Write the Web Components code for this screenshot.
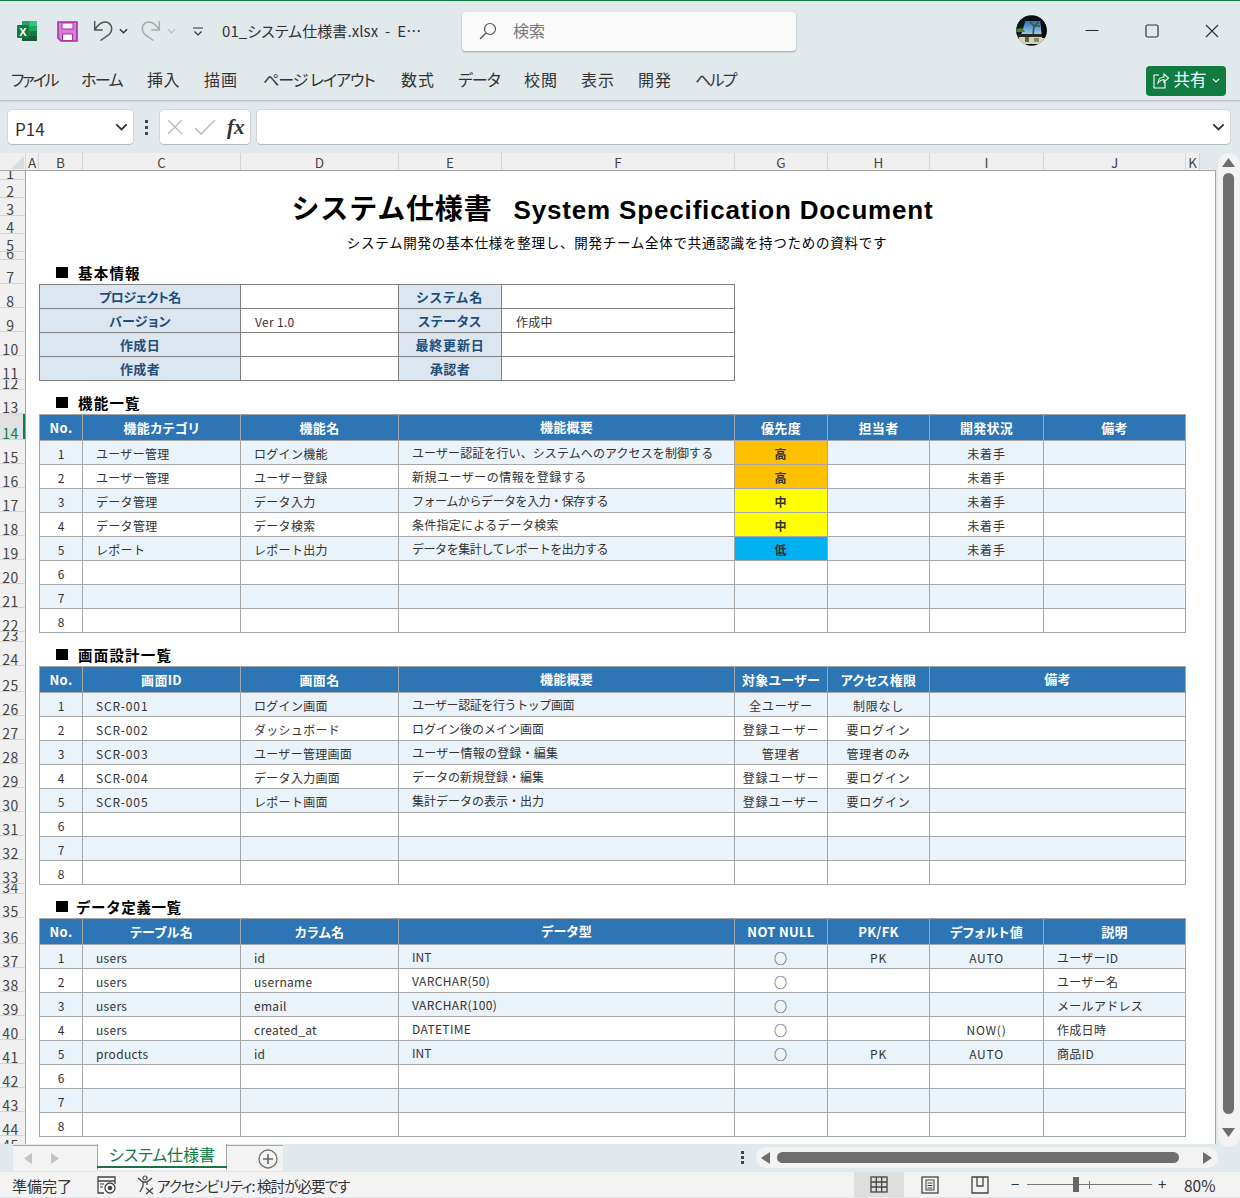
<!DOCTYPE html>
<html lang="ja">
<head>
<meta charset="utf-8">
<title>01_システム仕様書.xlsx</title>
<style>
html,body{margin:0;padding:0;background:#e1e9ed;}
body{width:1240px;height:1198px;overflow:hidden;font-family:"Noto Sans CJK JP","Noto Sans",sans-serif;}
excel-app{display:block;}
</style>
</head>
<body>
<excel-app></excel-app>
<script>
const JP='"Noto Sans CJK JP","Noto Sans",sans-serif';
class Base extends HTMLElement{
  connectedCallback(){
    if(this.shadowRoot)return;
    this.attachShadow({mode:'open'}).innerHTML=this.render();
  }
  render(){return ''}
}
function chev(c,w=10){return `<svg width="${w}" height="${w*.6}" viewBox="0 0 10 6"><path d="M1 1l4 4 4-4" fill="none" stroke="${c}" stroke-width="1.4"/></svg>`}

class ExcelApp extends Base{render(){return `<style>
:host{display:flex;flex-direction:column;width:1240px;height:1198px;overflow:hidden;background:#e1e9ed;}
.main{display:flex;height:992px;}
.left{width:1216px;display:flex;flex-direction:column;}
.body{display:flex;height:974px;}
</style>
<title-bar></title-bar><ribbon-tabs></ribbon-tabs><formula-bar></formula-bar>
<div class="main"><div class="left"><col-head></col-head><div class="body"><row-head></row-head><spec-sheet></spec-sheet></div></div><v-scroll></v-scroll></div>
<sheet-tabs></sheet-tabs><status-bar></status-bar>`}}

class TitleBar extends Base{render(){return `<style>
:host{display:block;height:60px;box-sizing:border-box;border-top:1px solid #107c41;position:relative;font-family:${JP};color:#333;}
.row{display:flex;align-items:center;height:59px;}
.excel{margin-left:17px;width:21px;height:20px;display:block;margin-top:1px}
.save{margin-left:19px;width:21px;height:21px;display:block;margin-top:1px}
.undo{margin-left:15px;width:20px;height:21px;display:block}
.c1{margin-left:6px;display:block}
.redo{margin-left:13px;width:20px;height:21px;display:block}
.c2{margin-left:6px;display:block}
.qat{margin-left:17px;width:10px;height:10px;display:block;margin-top:2px}
.name{margin-left:19px;width:212px;font-size:15px;font-feature-settings:"palt";white-space:pre;color:#333;margin-top:-1px;letter-spacing:.08px}
.search{margin-left:28px;width:334px;height:39px;margin-top:1px;box-sizing:border-box;background:#fafafa;border-radius:4px;box-shadow:0 1px 2px rgba(0,0,0,.3);display:flex;align-items:center;padding-left:17px;gap:16px;color:#777;font-size:16px}
.search span{padding-bottom:3px}
.avatar{margin-left:220px;width:31px;height:31px;display:block;margin-top:0}
.win{width:14px;height:14px;display:block}
.w2{margin-left:46px}
</style><div class="row">
<svg class="excel" viewBox="0 0 21 20"><rect x="5" y="0" width="15" height="20" rx="1" fill="#21a366"/><rect x="12.5" y="0" width="7.5" height="5" fill="#33c481"/><rect x="12.5" y="10" width="7.5" height="5" fill="#107c41"/><rect x="5" y="15" width="15" height="5" fill="#185c37"/><rect x="0" y="4" width="12" height="13" rx="1.2" fill="#107c41"/><text x="6" y="14.5" font-family="Liberation Sans" font-weight="700" font-size="11" fill="#fff" text-anchor="middle">X</text></svg>
<svg class="save" viewBox="0 0 21 21"><path d="M1 1H20V20H4L1 17Z" fill="#d480d4" stroke="#a733a7" stroke-width="1.6"/><rect x="5" y="2" width="11" height="6" fill="#f8ecf8" stroke="#a733a7" stroke-width="1"/><rect x="5.5" y="13" width="10" height="6.5" fill="#fff" stroke="#a733a7" stroke-width="1"/></svg>
<svg class="undo" viewBox="0 0 20 21"><path d="M1.7 1v9h8M1.7 10C6 2.600 12 .6 15.500 2.800c4.500 3 3.800 9.200.4 11.800L7.500 20.500" fill="none" stroke="#555" stroke-width="1.500"/></svg>
<svg class="c1" width="9" height="6" viewBox="0 0 10 6"><path d="M1 1l4 4 4-4" fill="none" stroke="#333" stroke-width="1.500"/></svg>
<svg class="redo" viewBox="0 0 20 21"><path d="M18.300 1v9h-8M18.300 10C14 2.600 8 .6 4.500 2.800c-4.500 3-3.800 9.200-.4 11.800l8.400 5.900" fill="none" stroke="#aaa" stroke-width="1.500"/></svg>
<svg class="c2" width="9" height="6" viewBox="0 0 10 6"><path d="M1 1l4 4 4-4" fill="none" stroke="#bbb" stroke-width="1.300"/></svg>
<svg class="qat" viewBox="0 0 10 10"><path d="M0 1h10M1.500 4.500L5 8l3.500-3.500" fill="none" stroke="#333" stroke-width="1.200"/></svg>
<div class="name">01_システム仕様書.xlsx  -  E⋯</div>
<div class="search"><svg width="18" height="18" viewBox="0 0 18 18"><circle cx="11" cy="7" r="5.500" fill="none" stroke="#555" stroke-width="1.200"/><path d="M7 11L1 17" stroke="#555" stroke-width="1.400"/></svg><span>検索</span></div>
<svg class="avatar" viewBox="0 0 31 31"><defs><clipPath id="av"><circle cx="15.500" cy="15.500" r="15.200"/></clipPath><linearGradient id="sk" x1="0" y1="0" x2="0" y2="1"><stop offset="0" stop-color="#2a6fc4"/><stop offset="1" stop-color="#a8cfe8"/></linearGradient></defs><g clip-path="url(#av)"><rect width="31" height="31" fill="#0c0f14"/><rect x="5" y="6" width="21" height="14" fill="url(#sk)"/><path d="M0 8Q4 3 10 4L5 20H0Z" fill="#0d1a10"/><path d="M0 14l6-1 3 4H0Z" fill="#4b7a3a"/><path d="M17 20l1-9M18 11l5-4M18 11l6 0M18 11l-4-4" stroke="#35592f" stroke-width="1.600"/><rect x="2" y="19" width="27" height="3" fill="#2a2a22"/><rect x="3" y="22" width="25" height="7" fill="#d8d2b8"/><rect x="9" y="22" width="4" height="5" fill="#5a6a48"/><rect x="18" y="23" width="5" height="4" fill="#8a8a70"/><path d="M24 3h7v20h-5Z" fill="#06080c"/></g></svg>
<svg class="win" style="margin-left:38px" viewBox="0 0 14 14"><path d="M0.500 6.500H13.500" stroke="#333" stroke-width="1.100"/></svg>
<svg class="win w2" viewBox="0 0 14 14"><rect x="1" y="1" width="12" height="12" rx="1.500" fill="none" stroke="#333" stroke-width="1.200"/></svg>
<svg class="win w2" viewBox="0 0 14 14"><path d="M1 1L13 13M13 1L1 13" stroke="#333" stroke-width="1.200"/></svg>
</div>`}}

class RibbonTabs extends Base{render(){
  const tabs=[['ファイル',70,-2.3],['ホーム',66,-1.6],['挿入',57,.5],['描画',59,1],['ページ レイアウト',138,-1],['数式',57,1],['データ',66,-1],['校閲',57,1],['表示',57,1],['開発',57,1],['ヘルプ',60,-1.7]];
  return `<style>
:host{display:flex;align-items:center;height:40px;box-sizing:border-box;padding:0 14px 0 11px;font-family:${JP};font-size:16px;color:#333;box-shadow:0 1px 2px rgba(0,0,0,.25);position:relative;z-index:1;font-feature-settings:"palt"}
.t{display:block;flex:none;white-space:pre;margin-top:-2px}
.share{margin-left:auto;width:80px;height:30px;background:#107c41;border-radius:4px;color:#fff;display:flex;align-items:center;justify-content:center;gap:5px;margin-top:1px;font-size:16.500px}
.share span{padding-bottom:3px}
</style>${tabs.map(t=>`<span class="t" style="width:${t[1]}px;letter-spacing:${t[2]}px">${t[0]}</span>`).join('')}
<div class="share"><svg width="16" height="17" viewBox="0 0 16 17"><path d="M6 3H1V16H12V10M5 11C5 7 8 5 11 5V2L15.500 6 11 10V7.500C9 7.500 6.500 9 5 11Z" fill="none" stroke="#fff" stroke-width="1.100"/></svg><span>共有</span>${chev('#fff',8)}</div>`}}

class FormulaBar extends Base{render(){return `<style>
:host{display:flex;height:53px;box-sizing:border-box;padding:10px 10px 9px 8px;align-items:stretch;font-family:${JP};}
.box{background:#fff;border-radius:4px;box-shadow:0 0 0 1px rgba(0,0,0,.07),0 1px 1px rgba(0,0,0,.14);display:flex;align-items:center;}
.name{width:125px;box-sizing:border-box;padding:0 5px 0 7px;justify-content:space-between;font-size:17px;color:#333}
.name span{padding-top:2px}
.dots{width:27px;display:flex;flex-direction:column;align-items:center;justify-content:center;gap:3px}
.dots i{width:3px;height:3px;background:#444;display:block}
.fx{width:90px;box-sizing:border-box;padding-left:7px;gap:0}
.fx em{font:italic 700 21px "Liberation Serif",serif;color:#333;margin-left:11px}
.inp{flex:1;margin-left:7px;justify-content:flex-end;padding-right:5px}
</style><div class="box name"><span>P14</span>${chev('#333',13)}</div>
<div class="dots"><i></i><i></i><i></i></div>
<div class="box fx"><svg width="16" height="16" viewBox="0 0 16 16"><path d="M1 1L15 15M15 1L1 15" stroke="#bbb" stroke-width="1.400"/></svg><svg style="margin-left:11px" width="22" height="16" viewBox="0 0 22 16"><path d="M1 9L7 15 21 1" fill="none" stroke="#bbb" stroke-width="1.500"/></svg><em>fx</em></div>
<div class="box inp">${chev('#333',13)}</div>`}}

class ColHead extends Base{render(){
  const c=[['A',13],['B',44],['C',158],['D',158],['E',103],['F',233],['G',93],['H',102],['I',114],['J',142],['K',14]];
  return `<style>
:host{display:flex;height:18px;box-sizing:border-box;font-family:${JP};font-size:13.500px;color:#444;border-bottom:1px solid #a6a6a6;background:#e1e9ed}
.corner{width:26px;flex:none;box-sizing:border-box;background:#f0f0f0;position:relative;border-right:1px solid #d4d4d4}
.corner svg{position:absolute;left:11px;top:3px}
.c{flex:none;box-sizing:border-box;background:#f0f0f0;text-align:center;line-height:17px;padding-top:1px;border-right:1px solid #d4d4d4;height:17px}
</style><div class="corner"><svg width="13" height="13" viewBox="0 0 13 13"><path d="M13 0V13H0Z" fill="#dcdcdc"/></svg></div>
${c.map(x=>`<div class="c" style="width:${x[1]}px">${x[0]}</div>`).join('')}`}}

class RowHead extends Base{render(){
  const rows=[[1,9],[2,18],[3,18],[4,18],[5,18],[6,8]];
  for(let i=7;i<=11;i++)rows.push([i,24]);
  rows.push([12,10],[13,24],[14,26]);
  for(let i=15;i<=22;i++)rows.push([i,24]);
  rows.push([23,10],[24,24],[25,26]);
  for(let i=26;i<=33;i++)rows.push([i,24]);
  rows.push([34,10],[35,24],[36,26]);
  for(let i=37;i<=44;i++)rows.push([i,24]);
  rows.push([45,16]);
  return `<style>
:host{display:flex;flex-direction:column;width:26px;flex:none;height:973px;overflow:hidden;box-sizing:border-box;background:#f0f0f0;border-right:1px solid #a6a6a6;font-family:${JP};font-size:14px;color:#444;letter-spacing:.5px}
.r{flex:none;box-sizing:border-box;border-bottom:1px solid #d4d4d4;display:flex;align-items:flex-end;justify-content:center;line-height:14px;padding-right:4px}
.clip{overflow:hidden}
.r span{display:block;height:14px;flex:none;margin-bottom:-1px}
.on{background:#e1e1e1;color:#107c41;box-shadow:inset -2px 0 0 #107c41}
</style>${rows.map(r=>`<div class="r ${r[0]==14?'on':''} ${r[1]<16?'clip':''}" style="height:${r[1]}px"><span>${r[0]}</span></div>`).join('')}`}}

class SpecSheet extends Base{render(){return `<style>
:host{display:block;width:1190px;height:973px;box-sizing:border-box;background:#fff;border-right:1px solid #a6a6a6;overflow:hidden;padding-left:13px;font-family:${JP};position:relative}
</style><sheet-title></sheet-title>
<sheet-heading>基本情報</sheet-heading><info-table></info-table>
<sheet-heading>機能一覧</sheet-heading><data-table source="features"></data-table>
<sheet-heading>画面設計一覧</sheet-heading><data-table source="screens"></data-table>
<sheet-heading tight>データ定義一覧</sheet-heading><data-table source="data"></data-table>`}}

class SheetTitle extends Base{render(){return `<style>
:host{display:block;width:1147px;height:80px;text-align:center;color:#000;font-family:${JP}}
.t{padding-top:18px;height:36px;line-height:36px;font-size:28px;font-weight:700;white-space:pre;letter-spacing:.85px}
.l{font-family:"Liberation Sans",sans-serif;font-size:26px;letter-spacing:.83px;margin-left:21px}
.s{margin-top:9px;line-height:16px;font-size:13.500px;letter-spacing:.75px;padding-left:9px}
</style><div class="t">システム仕様書<span class="l">System Specification Document</span></div><div class="s">システム開発の基本仕様を整理し、開発チーム全体で共通認識を持つための資料です</div>`}}

class SheetHeading extends Base{render(){return `<style>
:host{display:flex;height:33px;box-sizing:border-box;padding:12px 0 0 17px;align-items:flex-start;font-size:14.500px;font-weight:700;line-height:20px;color:#000;letter-spacing:1.200px}
:host([tight]){letter-spacing:.6px}
:host([tight]) i{margin-right:8px}
i{display:block;width:12px;height:11px;background:#000;margin:4px 10px 0 0;flex:none}
</style><i></i><slot></slot>`}}

class InfoTable extends Base{render(){
  const rows=[[['プロジェクト名',-.5],'',['システム名',1.3],''],[['バージョン',.3],'Ver 1.0',['ステータス',.6],'作成中'],[['作成日',.3],'',['最終更新日',.8],''],[['作成者',.3],'',['承認者',.3],'']];
  let h='';
  rows.forEach(r=>{r.forEach((v,i)=>{h+=i%2?`<div class="v"><span>${v}</span></div>`:`<div class="k" style="letter-spacing:${v[1]}px"><span>${v[0]}</span></div>`})});
  return `<style>
:host{display:grid;grid-template-columns:201px 158px 103px 233px;grid-auto-rows:24px;width:696px;box-sizing:border-box;border-left:1px solid #808080;border-top:1px solid #808080;font-family:${JP};}
div{box-sizing:border-box;border-right:1px solid #808080;border-bottom:1px solid #808080;display:flex;align-items:center;}
.k{background:#dce6f1;color:#1f4e79;font-weight:700;font-size:13px;justify-content:center;font-feature-settings:"palt";padding-bottom:1px}
.v{font-size:12px;color:#333;padding:1px 0 0 14px;letter-spacing:.3px}
</style>${h}`}}

const TABLES={
 features:{cols:[43,158,158,336,93,102,114,142],
  head:['No.','機能カテゴリ','機能名','機能概要','優先度','担当者','開発状況','備考'],
  align:'clllcccl',
  spacing:[.1,.5,-.45,.25,-.45],
  rows:[[1,'ユーザー管理','ログイン機能','ユーザー認証を行い、システムへのアクセスを制御する','高','','未着手',''],
  [2,'ユーザー管理','ユーザー登録','新規ユーザーの情報を登録する','高','','未着手',''],
  [3,'データ管理','データ入力','フォームからデータを入力・保存する','中','','未着手',''],
  [4,'データ管理','データ検索','条件指定によるデータ検索','中','','未着手',''],
  [5,'レポート','レポート出力','データを集計してレポートを出力する','低','','未着手',''],
  [6,'','','','','','',''],[7,'','','','','','',''],[8,'','','','','','','']],
  headShift:[3],prio:4},
 screens:{cols:[43,158,158,336,93,102,256],
  head:['No.','画面ID','画面名','機能概要','対象ユーザー','アクセス権限','備考'],
  align:'clllccl',
  spacing:[-.4,0,.2,0,0],
  rows:[[1,'SCR-001','ログイン画面','ユーザー認証を行うトップ画面','全ユーザー','制限なし',''],
  [2,'SCR-002','ダッシュボード','ログイン後のメイン画面','登録ユーザー','要ログイン',''],
  [3,'SCR-003','ユーザー管理画面','ユーザー情報の登録・編集','管理者','管理者のみ',''],
  [4,'SCR-004','データ入力画面','データの新規登録・編集','登録ユーザー','要ログイン',''],
  [5,'SCR-005','レポート画面','集計データの表示・出力','登録ユーザー','要ログイン',''],
  [6,'','','','','',''],[7,'','','','','',''],[8,'','','','','','']],
  headShift:[3,6]},
 data:{cols:[43,158,158,336,93,102,114,142],
  head:['No.','テーブル名','カラム名','データ型','NOT NULL','PK/FK','デフォルト値','説明'],
  align:'clllcccl',
  spacing:[0,.35,.35,.35,0],
  rows:[[1,'users','id','INT','○','PK','AUTO','ユーザーID'],
  [2,'users','username','VARCHAR(50)','○','','','ユーザー名'],
  [3,'users','email','VARCHAR(100)','○','','','メールアドレス'],
  [4,'users','created_at','DATETIME','○','','NOW()','作成日時'],
  [5,'products','id','INT','○','PK','AUTO','商品ID'],
  [6,'','','','','','',''],[7,'','','','','','',''],[8,'','','','','','','']],
  headShift:[3]}
};
const PRIO={'高':'#ffc000','中':'#ffff00','低':'#00b0f0'};

class DataTable extends Base{render(){
  const T=TABLES[this.getAttribute('source')];
  let h='';
  T.head.forEach((v,i)=>{h+=`<div class="h ${T.headShift.includes(i)?'up':''}"><span>${v}</span></div>`});
  T.rows.forEach((r,ri)=>{
    r.forEach((v,i)=>{
      const a=i==0?'n':(T.align[i]||'l');
      let cls=`d ${a} ${ri%2==0?'odd':''} ${i==3?'e':''}`, st='';
      if(T.prio===i&&v){cls+=' p';st=`background:${PRIO[v]}`}
      if(i==3&&ri<5)st+=`letter-spacing:${T.spacing[ri]}px`;
      if(v==='○')cls+=' o';
      if(typeof v==='string'&&/^SCR/.test(v))cls+=' scr';
      h+=`<div class="${cls}" style="${st}"><span>${v}</span></div>`;
    });
  });
  return `<style>
:host{display:grid;grid-template-columns:${T.cols.map(c=>c+'px').join(' ')};grid-template-rows:26px;grid-auto-rows:24px;width:1147px;box-sizing:border-box;border-left:1px solid #a6a6a6;border-top:1px solid #a6a6a6;font-family:${JP};}
div{box-sizing:border-box;border-right:1px solid #a6a6a6;border-bottom:1px solid #a6a6a6;display:flex;align-items:center;min-width:0;white-space:nowrap}
.h{background:#2e75b6;color:#fff;font-weight:700;font-size:13px;justify-content:center;padding-bottom:1px;font-feature-settings:"palt";letter-spacing:.3px}
.h.up{padding-bottom:3px}
.d{font-size:12px;color:#333;padding-top:1px}
.odd{background:#eaf2fa}
.n,.c{justify-content:center}
.c{letter-spacing:.8px}
.l{padding-left:13px;letter-spacing:.3px}
.e{padding-top:0;padding-bottom:1px;letter-spacing:0}
.scr{letter-spacing:.9px}
.p{font-weight:700;letter-spacing:0;padding-right:1px}
.o{font-size:13px;color:#222;letter-spacing:0;padding-right:1px}
</style>${h}`}}

class VScroll extends Base{render(){return `<style>
:host{display:flex;flex-direction:column;align-items:center;width:22px;height:994px;margin-left:2px;box-sizing:border-box;background:#f3f3f3;border-radius:11px;padding:5px 2px 0 0;position:relative;z-index:2}
.t{width:11px;height:941px;background:#6e6e6e;border-radius:6px;margin-top:6px}
svg{display:block;flex:none}
.d{margin-top:14px}
</style><svg width="13" height="9" viewBox="0 0 13 9"><path d="M6.500 0L13 9H0Z" fill="#6e6e6e"/></svg><div class="t"></div><svg class="d" width="13" height="9" viewBox="0 0 13 9"><path d="M6.500 9L13 0H0Z" fill="#6e6e6e"/></svg>`}}

class SheetTabs extends Base{render(){return `<style>
:host{display:flex;height:26px;box-sizing:border-box;padding-left:13px;font-family:${JP};position:relative}
.nav{width:84px;background:#f3f3f3;border-top:1px solid #a6a6a6;box-sizing:border-box;display:flex;align-items:center;gap:19px;padding-left:11px}
.tab{width:130px;box-sizing:border-box;background:#fff;border:1px solid #a6a6a6;border-top:0;border-bottom:0;color:#107c41;font-size:16px;text-align:center;font-feature-settings:"palt";display:flex;flex-direction:column;align-items:stretch;height:26px;margin-top:-1px;}
.tab span{display:block;height:22px;line-height:21px}
.tab i{display:block;height:2px;background:#1e7145;margin:0 -1px}
.plus{width:56px;background:#f3f3f3;border-top:1px solid #a6a6a6;box-sizing:border-box;display:flex;align-items:center;padding-left:31px}
.dots{position:absolute;left:741px;top:6px;display:flex;flex-direction:column;gap:2px}
.dots i{display:block;width:3px;height:3px;background:#444}
.hs{position:absolute;left:756px;top:2px;width:462px;height:21px;background:#f3f3f3;border-radius:11px;}
.hs .th{position:absolute;left:21px;top:5px;width:402px;height:11px;background:#6e6e6e;border-radius:6px}
.hs svg{position:absolute;top:5px}
</style>
<div class="nav"><svg width="8" height="11" viewBox="0 0 8 11"><path d="M8 0L0 5.500 8 11Z" fill="#c4c4c4"/></svg><svg width="8" height="11" viewBox="0 0 8 11"><path d="M0 0L8 5.500 0 11Z" fill="#c4c4c4"/></svg></div>
<div class="tab"><span>システム仕様書</span><i></i></div>
<div class="plus"><svg width="20" height="20" viewBox="0 0 20 20"><circle cx="10" cy="10" r="9" fill="none" stroke="#777" stroke-width="1.400"/><path d="M10 5V15M5 10H15" stroke="#666" stroke-width="1.600"/></svg></div>
<div class="dots"><i></i><i></i><i></i></div>
<div class="hs"><svg style="left:5px" width="9" height="12" viewBox="0 0 9 12"><path d="M9 0L0 6 9 12Z" fill="#6e6e6e"/></svg><div class="th"></div><svg style="left:447px" width="9" height="12" viewBox="0 0 9 12"><path d="M0 0L9 6 0 12Z" fill="#6e6e6e"/></svg></div>`}}

class StatusBar extends Base{render(){return `<style>
:host{display:flex;align-items:center;height:26px;box-sizing:border-box;background:#f3f3f3;border-top:1px solid #e6e6e6;font-family:${JP};font-size:15px;color:#333;font-feature-settings:"palt";padding-left:12px;white-space:nowrap}
.ready{padding-top:1px}
.rec{margin-left:25px;display:block}
.acc{margin-left:21px;display:block}
.txt{margin-left:2px;width:200px;font-size:14.500px;letter-spacing:-.9px;padding-top:2px;white-space:pre}
.views{margin-left:auto;display:flex;align-items:center;height:25px}
.v{width:50px;height:25px;display:flex;align-items:center;justify-content:center;flex:none}
.v.on{background:#dedede}
.v+.v{padding-left:1px;box-sizing:border-box}
.zoom{width:166px;height:25px;position:relative;flex:none}
.line{position:absolute;left:23px;width:125px;top:12px;height:1px;background:#777}
.thumb{position:absolute;left:69px;top:5px;width:6px;height:15px;background:#666}
.tick{position:absolute;left:85px;top:9px;width:1px;height:8px;background:#777}
.pm{position:absolute;top:0;line-height:24px;font-size:15px}
.pc{margin-left:14px;margin-right:23px;font-size:15.500px;width:33px;flex:none;padding-top:1px}
</style>
<span class="ready">準備完了</span>
<svg class="rec" width="19" height="18" viewBox="0 0 19 18"><path d="M1 1H18V5H1ZM1 5V17H7M18 5V8" fill="none" stroke="#444" stroke-width="1.300"/><path d="M3 8h4M3 11h3" stroke="#444"/><circle cx="13" cy="12" r="5" fill="none" stroke="#444" stroke-width="1.300"/><circle cx="13" cy="12" r="2.200" fill="#444"/></svg>
<svg class="acc" width="18" height="20" viewBox="0 0 18 20"><circle cx="8" cy="3" r="2" fill="none" stroke="#444" stroke-width="1.200"/><path d="M1 3L6 7H10L15 3M6 7V11L3 17M10 7V10" fill="none" stroke="#444" stroke-width="1.300"/><path d="M9 13L16 19M16 13L9 19" stroke="#444" stroke-width="1.300"/></svg>
<span class="txt">アクセシビリティ: 検討が必要です</span>
<div class="views">
<div class="v on"><svg width="18" height="17" viewBox="0 0 18 17"><rect x="1" y="1" width="16" height="15" fill="none" stroke="#444" stroke-width="1.300"/><path d="M6.300 1V16M11.700 1V16M1 6H17M1 11H17" stroke="#444" stroke-width="1.300"/></svg></div>
<div class="v"><svg width="18" height="18" viewBox="0 0 18 18"><rect x="1" y="1" width="16" height="16" fill="none" stroke="#444" stroke-width="1.300"/><rect x="5" y="4" width="8" height="10" fill="none" stroke="#444"/><path d="M6.500 7H11.500M6.500 9.500H11.500M6.500 12H11.500" stroke="#444"/></svg></div>
<div class="v"><svg width="18" height="18" viewBox="0 0 18 18"><path d="M1 1H17V17H1ZM6 1V10H12V1" fill="none" stroke="#444" stroke-width="1.300"/></svg></div>
</div>
<div class="zoom"><span class="pm" style="left:7px">−</span><div class="line"></div><div class="tick"></div><div class="thumb"></div><span class="pm" style="left:154px">+</span></div>
<span class="pc">80%</span>`}}

[['title-bar',TitleBar],['ribbon-tabs',RibbonTabs],['formula-bar',FormulaBar],['col-head',ColHead],['row-head',RowHead],['spec-sheet',SpecSheet],['sheet-title',SheetTitle],['sheet-heading',SheetHeading],['info-table',InfoTable],['data-table',DataTable],['v-scroll',VScroll],['sheet-tabs',SheetTabs],['status-bar',StatusBar],['excel-app',ExcelApp]].forEach(([n,c])=>customElements.define(n,c));
</script>
</body>
</html>
